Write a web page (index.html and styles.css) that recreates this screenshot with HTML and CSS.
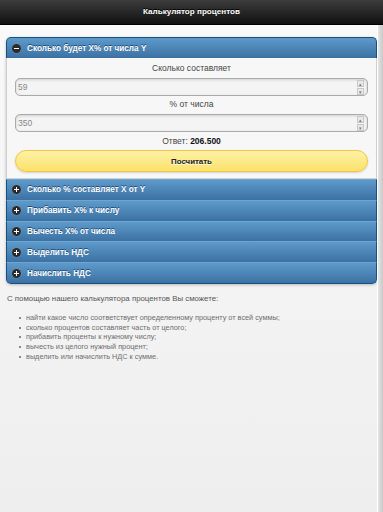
FILE: index.html
```html
<!DOCTYPE html>
<html lang="ru">

<head>
  <meta charset="UTF-8" />
  <meta name="viewport" content="width=device-width, initial-scale=1.0" />
  <title>Калькулятор процентов</title>
  <link rel="stylesheet" href="styles.css">
</head>

<body>
  <div class="header">Калькулятор процентов</div>

  <div class="frame">
    <div class="content">
      <div class="collapsible-set">
        <div class="collapsible open">
          <div class="coll-head">
            <span class="icon minus"></span>
            Сколько будет X% от числа Y
          </div>
          <div class="coll-body">
            <label class="field-label">Сколько составляет</label>
            <div class="num-input">
              <span class="val">59</span>
              <span class="spin"><i>▴</i><i>▾</i></span>
            </div>
            <label class="field-label">% от числа</label>
            <div class="num-input">
              <span class="val">350</span>
              <span class="spin"><i>▴</i><i>▾</i></span>
            </div>
            <div class="answer">Ответ: <b>206.500</b></div>
            <button class="calc-btn">Посчитать</button>
          </div>
        </div>
        <div class="collapsible">
          <div class="coll-head"><span class="icon plus"></span>Сколько % составляет X от Y</div>
        </div>
        <div class="collapsible">
          <div class="coll-head"><span class="icon plus"></span>Прибавить X% к числу</div>
        </div>
        <div class="collapsible">
          <div class="coll-head"><span class="icon plus"></span>Вычесть X% от числа</div>
        </div>
        <div class="collapsible">
          <div class="coll-head"><span class="icon plus"></span>Выделить НДС</div>
        </div>
        <div class="collapsible last">
          <div class="coll-head"><span class="icon plus"></span>Начислить НДС</div>
        </div>
      </div>

      <p class="intro">С помощью нашего калькулятора процентов Вы сможете:</p>
      <ul class="features">
        <li>найти какое число соответствует определенному проценту от всей суммы;</li>
        <li>сколько процентов составляет часть от целого;</li>
        <li>прибавить проценты к нужному числу;</li>
        <li>вычесть из целого нужный процент;</li>
        <li>выделить или начислить НДС к сумме.</li>
      </ul>
    </div>
    <div class="gutter"></div>
  </div>
</body>

</html>
```

FILE: styles.css
```css
* {
  box-sizing: border-box;
}

body {
  margin: 0;
  height: 512px;
  overflow: hidden;
  font-family: "Liberation Sans", Arial, sans-serif;
  font-size: 8.5px;
  background: #f1f1f1;
  color: #333;
  display: flex;
  flex-direction: column;
}

.header {
  height: 25px;
  line-height: 24px;
  text-align: center;
  font-weight: bold;
  font-size: 8.1px;
  color: #fff;
  text-shadow: 0 -1px 0 #000;
  background: linear-gradient(#3c3c3c, #111);
  border-bottom: 1px solid #000;
}

.frame {
  flex: 1;
  display: flex;
}

.content {
  flex: 1;
  padding: 12px 0 0 6px;
  background: linear-gradient(#f9f9f9, #eeeeee);
}

.gutter {
  width: 6px;
  border-left: 1px solid #fff;
  background: linear-gradient(90deg, #e4e4e4, #c9c9c9);
}

/* collapsible set */
.collapsible-set {
  border-radius: 5px;
  box-shadow: 0 1px 3px rgba(0, 0, 0, 0.25);
}

.coll-head {
  height: 20.8px;
  display: flex;
  align-items: center;
  gap: 6px;
  padding-left: 5px;
  font-size: 8.2px;
  font-weight: bold;
  color: #fff;
  text-shadow: 0 -1px 0 #1d4c78;
  background: linear-gradient(#5d9acb, #3c71a3);
  border: 1px solid #145181;
  border-top-color: #6fa6cf;
  border-bottom: none;
}

.collapsible:first-child .coll-head {
  border-radius: 5px 5px 0 0;
  border-top-color: #145181;
  height: 21px;
}

.collapsible.last .coll-head {
  height: 22px;
  border-bottom: 1px solid #145181;
  border-radius: 0 0 5px 5px;
}

.icon {
  width: 9px;
  height: 9px;
  border-radius: 50%;
  background: #2a2a2a;
  position: relative;
  flex: none;
  box-shadow: 0 0 1px rgba(255, 255, 255, 0.4);
}

.icon::before,
.icon::after {
  content: "";
  position: absolute;
  background: #fff;
}

.icon::before {
  left: 2px;
  top: 4px;
  width: 5px;
  height: 1px;
}

.plus::after {
  left: 4px;
  top: 2px;
  width: 1px;
  height: 5px;
}

.coll-body {
  background: #f7f7f7;
  border: 1px solid #cfcfcf;
  border-top: none;
  padding: 4px 8px 6px;
  display: flex;
  flex-direction: column;
  text-align: center;
}

.field-label {
  color: #444;
  line-height: 12px;
  margin-bottom: 4px;
}

.num-input {
  height: 18px;
  display: flex;
  align-items: center;
  justify-content: space-between;
  border: 1px solid #aaa;
  border-radius: 5px;
  background: #f4f4f4;
  box-shadow: inset 0 1px 3px rgba(0, 0, 0, 0.15);
  padding: 0 3px 0 2px;
  margin-bottom: 2px;
  color: #888;
  font-size: 8.5px;
}

.spin {
  display: flex;
  flex-direction: column;
  width: 7px;
  gap: 1px;
}

.spin i {
  font-style: normal;
  height: 7px;
  line-height: 6px;
  font-size: 5px;
  color: #777;
  background: #e8e8e8;
  border: 1px solid #c8c8c8;
  text-align: center;
}

.answer {
  line-height: 12px;
  color: #444;
  margin: 1px 0 3px;
}

.answer b {
  color: #111;
}

.calc-btn {
  height: 22px;
  border: 1px solid #f4c63f;
  border-radius: 11px;
  background: linear-gradient(#fdf1a6, #fbe26b);
  box-shadow: 0 1px 2px rgba(0, 0, 0, 0.15);
  font-family: inherit;
  font-size: 7.9px;
  font-weight: bold;
  color: #222;
  text-shadow: 0 1px 0 #fff;
}

/* description */
.intro {
  margin: 10px 0 10px 1px;
  color: #555;
  font-size: 7.85px;
}

.features {
  margin: 0;
  padding-left: 20px;
  color: #6e6e6e;
  font-size: 7.3px;
  line-height: 9.6px;
}

.features li {
  list-style: none;
  position: relative;
}

.features li::before {
  content: "";
  position: absolute;
  left: -7px;
  top: 4px;
  width: 2px;
  height: 2px;
  background: #888;
}
```
